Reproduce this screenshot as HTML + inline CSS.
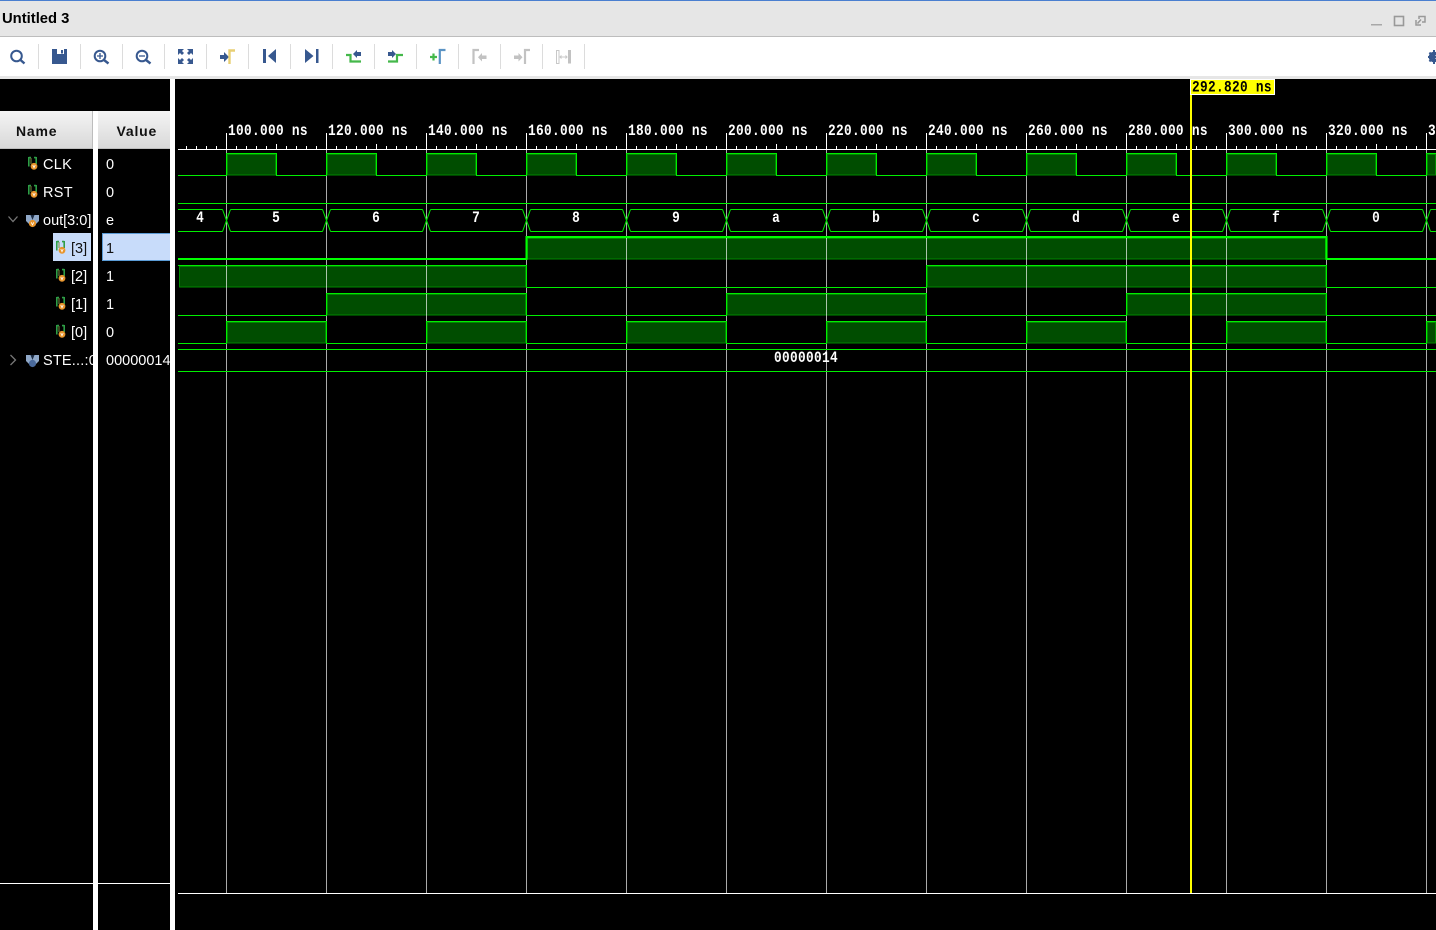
<!DOCTYPE html>
<html><head><meta charset="utf-8"><title>Untitled 3</title>
<style>
html,body{margin:0;padding:0;background:#000;width:1436px;height:930px;overflow:hidden}
svg{display:block}
.s{font:14.5px "Liberation Sans",sans-serif;fill:#fff}
.r{font:bold 16px "Liberation Mono",monospace;fill:#fff;letter-spacing:.4px}
.b{font:bold 16px "Liberation Mono",monospace;fill:#fff;text-anchor:middle}
.h{font:bold 14px "Liberation Sans",sans-serif;fill:#111;letter-spacing:.8px}
.c{shape-rendering:crispEdges}
</style></head><body>
<svg width="1436" height="930" viewBox="0 0 1436 930" xmlns="http://www.w3.org/2000/svg">
<defs>
<linearGradient id="hd" x1="0" y1="0" x2="0" y2="1"><stop offset="0" stop-color="#f4f4f4"/><stop offset="1" stop-color="#d8d8d8"/></linearGradient>
<pattern id="tk" patternUnits="userSpaceOnUse" x="226" y="144" width="10" height="5"><rect x="0" y="2" width="1" height="3" fill="#fff"/></pattern>
<g id="sig"><path d="M.8 0V9.500M.8 .6H3M8.200 0V7M6 .6H8.200" stroke="#2e9e46" stroke-width="1.600" fill="none"/><path d="M3 1V7" stroke="#7a8a40" stroke-width="1"/><circle cx="6" cy="9.300" r="3.400" fill="#e8942a"/><path d="M4.800 8.100L6 10.700L7.200 8.100" stroke="#fff" stroke-width=".8" fill="none"/></g>
<g id="bus"><path d="M0 1H13V7L10 10H3L0 7Z" fill="#8fa8c8"/><path d="M4.500 1H8.500L6.500 6Z" fill="#1c2c44"/></g>
<path id="x" d="M-4 209.500L0 220.500L-4 231.500M4 209.500L0 220.500L4 231.500" fill="none" stroke="#0e0" stroke-width="1"/>
</defs>

<!-- window chrome -->
<rect width="1436" height="37" fill="#e6e6e6"/>
<rect width="1436" height="1" fill="#4a7fd0"/>
<rect y="36" width="1436" height="1" fill="#bdbdbd"/>
<rect y="37" width="1436" height="39" fill="#fff"/>
<rect y="76" width="1436" height="3" fill="#e6e6e6"/>
<text x="2" y="23" style="font:bold 14.800px 'Liberation Sans',sans-serif;fill:#000">Untitled 3</text>
<g class="c" fill="#a8a8a8"><rect x="1371" y="24" width="11" height="1.500"/></g>
<rect x="1394.500" y="16.500" width="9" height="9" fill="none" stroke="#999" stroke-width="1.600"/>
<path d="M1416 20V25H1421M1419 19V16.500H1425V22H1422M1421 19.500L1417.500 23.500" fill="none" stroke="#999" stroke-width="1.500"/>

<!-- toolbar separators -->
<g fill="#dcdcdc" class="c">
<rect x="38" y="44" width="1" height="25"/><rect x="80" y="44" width="1" height="25"/><rect x="122" y="44" width="1" height="25"/><rect x="164" y="44" width="1" height="25"/><rect x="206" y="44" width="1" height="25"/><rect x="248" y="44" width="1" height="25"/><rect x="290" y="44" width="1" height="25"/><rect x="332" y="44" width="1" height="25"/><rect x="374" y="44" width="1" height="25"/><rect x="416" y="44" width="1" height="25"/><rect x="458" y="44" width="1" height="25"/><rect x="500" y="44" width="1" height="25"/><rect x="542" y="44" width="1" height="25"/><rect x="584" y="44" width="1" height="25"/>
</g>
<!-- toolbar icons -->
<g fill="none" stroke="#37588f" stroke-width="2">
<circle cx="16.500" cy="56" r="5.300"/><path d="M20.500 60L24.500 63.500" stroke-width="2.400"/>
<circle cx="100" cy="56" r="5.300"/><path d="M104 60L108.500 63.500" stroke-width="2.400"/><path d="M97 56H103M100 53V59" stroke-width="1.300"/>
<circle cx="142" cy="56" r="5.300"/><path d="M146 60L150.500 63.500" stroke-width="2.400"/><path d="M139 56H145" stroke-width="1.300"/>
</g>
<path d="M52 49H67V64H52Z" fill="#37588f"/><rect x="57" y="49" width="7" height="5" fill="#fff"/><rect x="61" y="50" width="2" height="3.500" fill="#37588f"/>
<g fill="#37588f">
<path d="M178 49H184L182 51L184 53L182 55L180 53L178 55Z"/><path d="M193 49H187L189 51L187 53L189 55L191 53L193 55Z"/>
<path d="M178 64H184L182 62L184 60L182 58L180 60L178 58Z"/><path d="M193 64H187L189 62L187 60L189 58L191 60L193 58Z"/>
<path d="M220 55H224V52L229 57L224 62V59H220Z"/>
<rect x="263" y="49" width="3" height="14"/><path d="M276 49V63L268 56Z"/>
<rect x="316" y="49" width="2.500" height="14"/><path d="M305 49V63L313.500 56Z"/>
<path d="M361 52V56H357V58L353 54L357 50V52Z"/>
<path d="M388 52H392V50L396 54L392 58V56H388Z"/>
</g>
<path d="M229.500 64V50.500H235" fill="none" stroke="#e8cf74" stroke-width="2.400"/>
<g fill="none" stroke="#44b84a" stroke-width="2.200">
<path d="M346 55H350.500V61.500H361"/><path d="M388 61.500H397V55H403"/>
<path d="M430 57H437M433.500 53.500V60.500"/>
</g>
<path d="M439.800 64V50H445.500" fill="none" stroke="#5b93c4" stroke-width="2.200"/>
<g fill="none" stroke="#c2c2c2" stroke-width="2.200">
<path d="M473.500 64V50H479"/><path d="M525 64V50H530"/>
</g>
<g fill="#c2c2c2">
<path d="M486.500 55.500V59H482V61.500L478 57.300L482 53V55.500Z"/>
<path d="M514 55.500H518.500V53L522.500 57.300L518.500 61.500V59H514Z"/>
<rect x="568" y="50" width="3" height="13.500"/>
</g>
<rect x="556.500" y="50.500" width="2.500" height="13" fill="none" stroke="#c8c8c8"/>
<path d="M560 57H567M561.500 55.500L560 57L561.500 58.500M565.500 55.500L567 57L565.500 58.500" fill="none" stroke="#c8c8c8"/>
<circle cx="1434" cy="57" r="3.800" fill="none" stroke="#37588f" stroke-width="3"/>
<path d="M1434 50V64M1428 57H1436M1429.500 52.500L1436 61.500M1429.500 61.500L1436 52.500" stroke="#37588f" stroke-width="2"/>

<!-- panel separators -->
<g class="c">
<rect x="93" y="111" width="5" height="819" fill="#fff"/>
<rect x="170" y="79" width="5" height="851" fill="#fff"/>
<rect x="0" y="883" width="93" height="1" fill="#fff"/>
<rect x="98" y="883" width="72" height="1" fill="#fff"/>
<rect x="178" y="893" width="1258" height="1" fill="#fff"/>
</g>
<!-- names header -->
<rect x="0" y="111" width="93" height="38" fill="url(#hd)"/>
<rect x="98" y="111" width="72" height="38" fill="url(#hd)"/>
<g class="c" fill="#bdbdbd"><rect x="0" y="148" width="93" height="1"/><rect x="98" y="148" width="72" height="1"/><rect x="92" y="111" width="1" height="38"/></g>
<text class="h" x="16" y="136">Name</text>
<text class="h" x="116.500" y="136">Value</text>

<!-- selection -->
<rect x="53" y="233" width="38" height="28" fill="#c8dcfa"/>
<rect x="102" y="233" width="68" height="28" fill="#c8dcfa"/>
<path d="M170 233.500H102.500V260.500H170" fill="none" stroke="#5b9bd5" stroke-width="1" class="c"/>

<!-- names -->
<use href="#sig" x="28" y="157"/><text class="s" x="43" y="169" style="letter-spacing:.3px">CLK</text>
<use href="#sig" x="28" y="185"/><text class="s" x="43" y="197" style="letter-spacing:.3px">RST</text>
<path d="M8.500 216.500L13 221.500L17.500 216.500" fill="none" stroke="#777" stroke-width="1.300"/>
<g transform="translate(26 214)"><use href="#bus"/><circle cx="6.500" cy="9.500" r="3.600" fill="#e8942a"/><path d="M5.200 8.300L6.500 10.900L7.800 8.300" stroke="#fff" stroke-width=".8" fill="none"/></g>
<text class="s" x="43" y="225">out[3:0]</text>
<use href="#sig" x="56" y="241"/><text class="s" x="71" y="253" style="fill:#111">[3]</text>
<use href="#sig" x="56" y="269"/><text class="s" x="71" y="281">[2]</text>
<use href="#sig" x="56" y="297"/><text class="s" x="71" y="309">[1]</text>
<use href="#sig" x="56" y="325"/><text class="s" x="71" y="337">[0]</text>
<path d="M10.500 355L15.500 360L10.500 365" fill="none" stroke="#777" stroke-width="1.300"/>
<g transform="translate(26 354)"><use href="#bus"/><circle cx="6.500" cy="9.500" r="3.600" fill="#4a6a9c"/></g>
<svg x="0" y="340" width="93" height="40"><text class="s" x="43" y="25" style="letter-spacing:.2px">STE...:0</text></svg>

<!-- values -->
<text class="s" x="106" y="169">0</text>
<text class="s" x="106" y="197">0</text>
<text class="s" x="106" y="225">e</text>
<text class="s" x="106" y="253" style="fill:#111">1</text>
<text class="s" x="106" y="281">1</text>
<text class="s" x="106" y="309">1</text>
<text class="s" x="106" y="337">0</text>
<svg x="98" y="340" width="72" height="40"><text class="s" x="8" y="25">00000014</text></svg>

<!-- ruler -->
<rect x="178" y="149" width="1258" height="1" fill="#fff" class="c"/>
<rect x="178" y="144" width="1258" height="5" fill="url(#tk)" class="c"/>
<g fill="#fff" class="c">
<rect x="226" y="133" width="1" height="16"/><rect x="326" y="133" width="1" height="16"/><rect x="426" y="133" width="1" height="16"/><rect x="526" y="133" width="1" height="16"/><rect x="626" y="133" width="1" height="16"/><rect x="726" y="133" width="1" height="16"/><rect x="826" y="133" width="1" height="16"/><rect x="926" y="133" width="1" height="16"/><rect x="1026" y="133" width="1" height="16"/><rect x="1126" y="133" width="1" height="16"/><rect x="1226" y="133" width="1" height="16"/><rect x="1326" y="133" width="1" height="16"/><rect x="1426" y="133" width="1" height="16"/>
<rect x="276" y="144" width="1" height="5"/><rect x="376" y="144" width="1" height="5"/><rect x="476" y="144" width="1" height="5"/><rect x="576" y="144" width="1" height="5"/><rect x="676" y="144" width="1" height="5"/><rect x="776" y="144" width="1" height="5"/><rect x="876" y="144" width="1" height="5"/><rect x="976" y="144" width="1" height="5"/><rect x="1076" y="144" width="1" height="5"/><rect x="1176" y="144" width="1" height="5"/><rect x="1276" y="144" width="1" height="5"/><rect x="1376" y="144" width="1" height="5"/>
</g>
<g class="r" transform="scale(.8 1)">
<text x="285" y="135">100.000 ns</text><text x="410" y="135">120.000 ns</text><text x="535" y="135">140.000 ns</text><text x="660" y="135">160.000 ns</text><text x="785" y="135">180.000 ns</text><text x="910" y="135">200.000 ns</text><text x="1035" y="135">220.000 ns</text><text x="1160" y="135">240.000 ns</text><text x="1285" y="135">260.000 ns</text><text x="1410" y="135">280.000 ns</text><text x="1535" y="135">300.000 ns</text><text x="1660" y="135">320.000 ns</text><text x="1785" y="135">340.000 ns</text>
</g>

<!-- fills -->
<g fill="#006e00" fill-opacity=".7" stroke="#008800" stroke-width="1" class="c">
<rect x="227.500" y="154.500" width="48" height="20.500"/><rect x="327.500" y="154.500" width="48" height="20.500"/><rect x="427.500" y="154.500" width="48" height="20.500"/><rect x="527.500" y="154.500" width="48" height="20.500"/><rect x="627.500" y="154.500" width="48" height="20.500"/><rect x="727.500" y="154.500" width="48" height="20.500"/><rect x="827.500" y="154.500" width="48" height="20.500"/><rect x="927.500" y="154.500" width="48" height="20.500"/><rect x="1027.500" y="154.500" width="48" height="20.500"/><rect x="1127.500" y="154.500" width="48" height="20.500"/><rect x="1227.500" y="154.500" width="48" height="20.500"/><rect x="1327.500" y="154.500" width="48" height="20.500"/><rect x="1427.500" y="154.500" width="8" height="20.500"/>
<rect x="527.500" y="238.500" width="798" height="20.500"/>
<rect x="179.500" y="266.500" width="346" height="20.500"/><rect x="927.500" y="266.500" width="398" height="20.500"/>
<rect x="327.500" y="294.500" width="198" height="20.500"/><rect x="727.500" y="294.500" width="198" height="20.500"/><rect x="1127.500" y="294.500" width="198" height="20.500"/>
<rect x="227.500" y="322.500" width="98" height="20.500"/><rect x="427.500" y="322.500" width="98" height="20.500"/><rect x="627.500" y="322.500" width="98" height="20.500"/><rect x="827.500" y="322.500" width="98" height="20.500"/><rect x="1027.500" y="322.500" width="98" height="20.500"/><rect x="1227.500" y="322.500" width="98" height="20.500"/><rect x="1427.500" y="322.500" width="8" height="20.500"/>
</g>

<!-- grid -->
<g fill="#aaa" class="c">
<rect x="226" y="150" width="1" height="743" style="mix-blend-mode:screen"/><rect x="326" y="150" width="1" height="743" style="mix-blend-mode:screen"/><rect x="426" y="150" width="1" height="743" style="mix-blend-mode:screen"/><rect x="526" y="150" width="1" height="743" style="mix-blend-mode:screen"/><rect x="626" y="150" width="1" height="743" style="mix-blend-mode:screen"/><rect x="726" y="150" width="1" height="743" style="mix-blend-mode:screen"/><rect x="826" y="150" width="1" height="743" style="mix-blend-mode:screen"/><rect x="926" y="150" width="1" height="743" style="mix-blend-mode:screen"/><rect x="1026" y="150" width="1" height="743" style="mix-blend-mode:screen"/><rect x="1126" y="150" width="1" height="743" style="mix-blend-mode:screen"/><rect x="1226" y="150" width="1" height="743" style="mix-blend-mode:screen"/><rect x="1326" y="150" width="1" height="743" style="mix-blend-mode:screen"/><rect x="1426" y="150" width="1" height="743" style="mix-blend-mode:screen"/>
</g>

<!-- waves -->
<g fill="none" stroke="#0e0" stroke-width="1" class="c">
<path d="M178 175.500H226.500V153.500H276.500V175.500H326.500V153.500H376.500V175.500H426.500V153.500H476.500V175.500H526.500V153.500H576.500V175.500H626.500V153.500H676.500V175.500H726.500V153.500H776.500V175.500H826.500V153.500H876.500V175.500H926.500V153.500H976.500V175.500H1026.500V153.500H1076.500V175.500H1126.500V153.500H1176.500V175.500H1226.500V153.500H1276.500V175.500H1326.500V153.500H1376.500V175.500H1426.500V153.500H1436"/>
<path d="M178 203.500H1436"/>
<path d="M178 265.500H526.500V287.500H926.500V265.500H1326.500V287.500H1436"/>
<path d="M178 315.500H326.500V293.500H526.500V315.500H726.500V293.500H926.500V315.500H1126.500V293.500H1326.500V315.500H1436"/>
<path d="M178 343.500H226.500V321.500H326.500V343.500H426.500V321.500H526.500V343.500H626.500V321.500H726.500V343.500H826.500V321.500H926.500V343.500H1026.500V321.500H1126.500V343.500H1226.500V321.500H1326.500V343.500H1426.500V321.500H1436"/>
<path d="M178 349.500H1436M178 371.500H1436"/>
<path d="M178 209.500H222.500M178 231.500H222.500"/>
<path d="M230.500 209.500H1436M230.500 231.500H1436" stroke-dasharray="92 8"/>
</g>
<path d="M178 259H526.500V237H1326.500V259H1436" fill="none" stroke="#0f0" stroke-width="2" class="c"/>
<g>
<use href="#x" x="226.500"/><use href="#x" x="326.500"/><use href="#x" x="426.500"/><use href="#x" x="526.500"/><use href="#x" x="626.500"/><use href="#x" x="726.500"/><use href="#x" x="826.500"/><use href="#x" x="926.500"/><use href="#x" x="1026.500"/><use href="#x" x="1126.500"/><use href="#x" x="1226.500"/><use href="#x" x="1326.500"/><use href="#x" x="1426.500"/>
</g>
<g class="b" transform="scale(.8 1)">
<text x="250" y="222">4</text><text x="345" y="222">5</text><text x="470" y="222">6</text><text x="595" y="222">7</text><text x="720" y="222">8</text><text x="845" y="222">9</text><text x="970" y="222">a</text><text x="1095" y="222">b</text><text x="1220" y="222">c</text><text x="1345" y="222">d</text><text x="1470" y="222">e</text><text x="1595" y="222">f</text><text x="1720" y="222">0</text>
<text x="1007.500" y="362" style="letter-spacing:.4px">00000014</text>
</g>

<!-- cursor -->
<rect x="1190" y="79" width="2" height="814" fill="#ff0" class="c"/>
<rect x="1190.500" y="79.500" width="84" height="15" fill="#ff0" stroke="#fff" stroke-width="1" class="c"/>
<g transform="scale(.8 1)"><text x="1490" y="91.500" class="r" style="fill:#000">292.820 ns</text></g>
</svg>
</body></html>
